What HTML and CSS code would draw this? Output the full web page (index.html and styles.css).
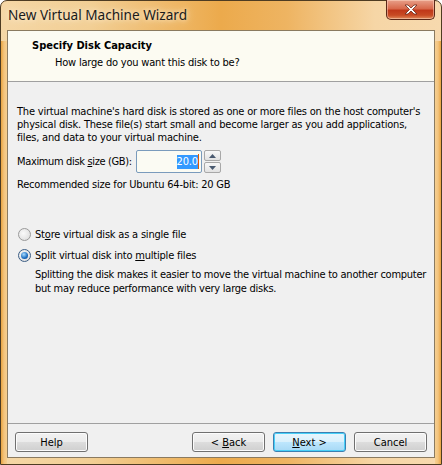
FILE: index.html
```html
<!DOCTYPE html>
<html>
<head>
<meta charset="utf-8">
<link rel="stylesheet" href="styles.css">
</head>
<body>
<div class="window">
  <div class="titlebar">
    <span class="title">New Virtual Machine Wizard</span>
    <div class="close">
      <svg width="18" height="11" viewBox="0 0 18 11"><path d="M3 1h3l3 3 3-3h3l-4.5 4.5L15 10h-3l-3-3-3 3H3l4.5-4.5z" fill="#fff" stroke="#6a2a1a" stroke-width="0.8"/></svg>
    </div>
  </div>
  <div class="client">
    <div class="header">
      <div class="h-title">Specify Disk Capacity</div>
      <div class="h-sub">How large do you want this disk to be?</div>
    </div>
    <div class="body">
      <p class="para">The virtual machine's hard disk is stored as one or more files on the host computer's physical disk. These file(s) start small and become larger as you add applications, files, and data to your virtual machine.</p>
      <div class="size-row">
        <span class="label">Maximum disk <u>s</u>ize (GB):</span>
        <div class="input"><span class="sel">20.0</span><span class="caret"></span></div>
        <div class="spin">
          <div class="spin-btn"><svg width="7" height="4" viewBox="0 0 7 4"><path d="M0 4L3.5 0 7 4z" fill="#4a5a70"/></svg></div>
          <div class="spin-btn"><svg width="7" height="4" viewBox="0 0 7 4"><path d="M0 0L3.5 4 7 0z" fill="#4a5a70"/></svg></div>
        </div>
      </div>
      <div class="rec">Recommended size for Ubuntu 64-bit: 20 GB</div>
      <div class="radio-row"><span class="radio"></span><span>St<u>o</u>re virtual disk as a single file</span></div>
      <div class="radio-row"><span class="radio on"><span class="dot"></span></span><span>Split virtual disk into <u>m</u>ultiple files</span></div>
      <p class="desc">Splitting the disk makes it easier to move the virtual machine to another computer but may reduce performance with very large disks.</p>
    </div>
    <div class="footer">
      <div class="btn"><span>Help</span></div>
      <div class="spacer"></div>
      <div class="btn"><span>&lt; <u>B</u>ack</span></div>
      <div class="btn default"><span><u>N</u>ext &gt;</span></div>
      <div class="btn"><span>Cancel</span></div>
    </div>
  </div>
</div>
</body>
</html>
```

FILE: styles.css
```css
html, body {
  margin: 0;
  padding: 0;
  width: 442px;
  height: 465px;
  overflow: hidden;
  background: #fff;
}
.window {
  box-sizing: border-box;
  width: 442px;
  height: 465px;
  border: 1px solid #4e3c22;
  border-radius: 7px 7px 0 0;
  background: linear-gradient(90deg, #f5d7a6 0%, #f2cf95 20%, #ecaa4c 50%, #eeb462 65%, #f6d6a6 85%, #f7d9ae 100%);
  display: flex;
  flex-direction: column;
  padding: 0 6px 6px 6px;
  font-family: "DejaVu Sans Condensed", "DejaVu Sans", sans-serif;
  font-size: 11px;
  color: #000;
  position: relative;
}
.window::before {
  content: "";
  position: absolute;
  left: 0; right: 0; top: 40px; bottom: 0;
  background: linear-gradient(90deg, #e9a441 0, #f3c47e 3px, #f6cf90 6px, transparent 6px, transparent calc(100% - 6px), #f6cf90 calc(100% - 6px), #f3c47e calc(100% - 3px), #e9a441 100%);
  pointer-events: none;
}
.titlebar {
  height: 29px;
  display: flex;
  align-items: flex-start;
  position: relative;
}
.title {
  font-family: "Noto Sans", "Open Sans", sans-serif;
  font-size: 13.6px;
  color: #1a1a1a;
  margin-top: 4px;
  margin-left: 1px;
  text-shadow: 0 0 8px #fbeacd, 0 0 4px #fbeacd;
}
.close {
  position: absolute;
  right: 0;
  top: -1px;
  width: 49px;
  height: 20px;
  box-sizing: border-box;
  border: 1px solid #5a2818;
  border-top: none;
  border-radius: 0 0 5px 5px;
  background: linear-gradient(180deg, #e8a08a 0%, #d8694c 45%, #c0381a 55%, #c84a24 80%, #e08a5a 100%);
  display: flex;
  align-items: center;
  justify-content: center;
  box-shadow: inset 0 0 0 1px rgba(255,220,200,0.5);
}
.client {
  flex: 1;
  display: flex;
  flex-direction: column;
  border: 1px solid #8a7a60;
  background: #f0f0f0;
  position: relative;
  z-index: 1;
}
.header {
  height: 51px;
  background: #fcfbf2;
  border-bottom: 1px solid #a0a0a0;
  box-sizing: border-box;
  padding-left: 24px;
  padding-top: 8px;
}
.h-title {
  font-weight: bold;
  line-height: 13px;
}
.h-sub {
  margin-top: 4px;
  margin-left: 23px;
  line-height: 13px;
  letter-spacing: -0.2px;
}
.body {
  flex: 1;
  padding: 23px 9px 0 9px;
  letter-spacing: -0.2px;
}
.para {
  margin: 0;
  line-height: 13px;
}
.size-row {
  display: flex;
  align-items: center;
  margin-top: 6px;
  height: 23px;
}
.label {
  letter-spacing: -0.35px;
}
.input {
  box-sizing: border-box;
  width: 66px;
  height: 23px;
  margin-left: 4px;
  border: 1px solid #7a9bbc;
  border-radius: 2px;
  background: #fbfbf3;
  display: flex;
  align-items: center;
  justify-content: flex-end;
  padding-right: 2px;
}
.sel {
  background: #3399ff;
  color: #fff;
  line-height: 14px;
}
.caret {
  width: 1px;
  height: 15px;
  background: #e05a00;
}
.spin {
  display: flex;
  flex-direction: column;
  gap: 1px;
  margin-left: 2px;
  height: 23px;
}
.spin-btn {
  box-sizing: border-box;
  width: 17px;
  height: 11px;
  border: 1px solid #a8a8a8;
  border-radius: 2px;
  background: linear-gradient(180deg, #f8f8f8, #e2e2e2);
  display: flex;
  align-items: center;
  justify-content: center;
}
.rec {
  margin-top: 5px;
  line-height: 13px;
}
.radio-row {
  display: flex;
  align-items: center;
  height: 13px;
  margin-top: 8px;
}
.rec + .radio-row {
  margin-top: 37px;
}
.radio {
  box-sizing: border-box;
  width: 13px;
  height: 13px;
  border-radius: 50%;
  border: 1px solid #9a9a9a;
  background: radial-gradient(circle at 40% 40%, #fafafa, #d8d8d8);
  margin-left: 1px;
  margin-right: 4px;
  display: flex;
  align-items: center;
  justify-content: center;
}
.radio.on {
  border-color: #3c5e85;
}
.dot {
  width: 7px;
  height: 7px;
  border-radius: 50%;
  background: radial-gradient(circle at 40% 35%, #a8dcff, #1a6cc0 60%, #0a3c80);
}
.desc {
  margin: 6px -7px 0 18px;
  line-height: 14px;
  letter-spacing: -0.25px;
}
.footer {
  border-top: 1px solid #a0a0a0;
  height: 34px;
  display: flex;
  align-items: flex-start;
  padding: 8px 7px 0 7px;
  gap: 8px;
  box-sizing: border-box;
}
.spacer {
  flex: 1;
}
.btn {
  box-sizing: border-box;
  width: 73px;
  height: 20px;
  border: 1px solid #707070;
  border-radius: 3px;
  background: linear-gradient(180deg, #f2f2f2 0%, #ebebeb 50%, #dddddd 50%, #cfcfcf 100%);
  box-shadow: inset 0 0 0 1px #fcfcfc;
  display: flex;
  align-items: center;
  justify-content: center;
  line-height: 13px;
}
.btn.default {
  border-color: #3c7fb1;
  background: linear-gradient(180deg, #eaf6fd 0%, #d9f0fc 50%, #bee6fd 50%, #a7d9f5 100%);
  box-shadow: inset 0 0 0 1px #48d0f8;
}
```
